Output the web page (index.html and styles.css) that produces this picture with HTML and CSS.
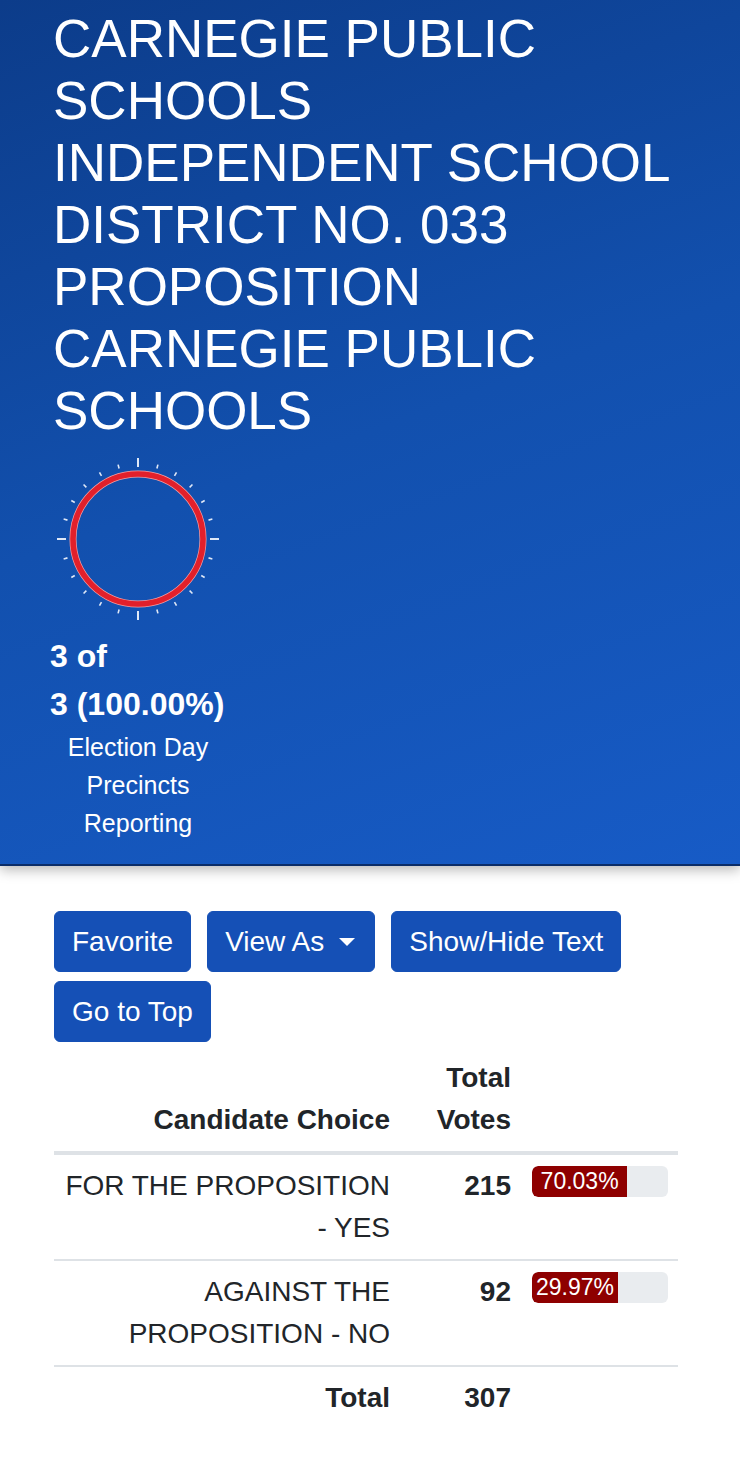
FILE: index.html
```html
<!DOCTYPE html>
<html lang="en">
<head>
<meta charset="utf-8">
<title>Carnegie Public Schools Proposition</title>
<link rel="stylesheet" href="styles.css">
</head>
<body>
<header class="hero">
  <h1 class="hero-title">CARNEGIE PUBLIC SCHOOLS INDEPENDENT SCHOOL DISTRICT NO. 033 PROPOSITION CARNEGIE PUBLIC SCHOOLS</h1>
  <div class="reporting">
    <svg class="gauge" width="170" height="170" viewBox="-85 -85 170 170" aria-hidden="true">
      <g class="ticks">
        <line class="major" x1="0" y1="-72" x2="0" y2="-81"/>
        <line x1="0" y1="-73" x2="0" y2="-77" transform="rotate(15)"/>
        <line x1="0" y1="-73" x2="0" y2="-77" transform="rotate(30)"/>
        <line x1="0" y1="-73" x2="0" y2="-77" transform="rotate(45)"/>
        <line x1="0" y1="-73" x2="0" y2="-77" transform="rotate(60)"/>
        <line x1="0" y1="-73" x2="0" y2="-77" transform="rotate(75)"/>
        <line class="major" x1="0" y1="-72" x2="0" y2="-81" transform="rotate(90)"/>
        <line x1="0" y1="-73" x2="0" y2="-77" transform="rotate(105)"/>
        <line x1="0" y1="-73" x2="0" y2="-77" transform="rotate(120)"/>
        <line x1="0" y1="-73" x2="0" y2="-77" transform="rotate(135)"/>
        <line x1="0" y1="-73" x2="0" y2="-77" transform="rotate(150)"/>
        <line x1="0" y1="-73" x2="0" y2="-77" transform="rotate(165)"/>
        <line class="major" x1="0" y1="-72" x2="0" y2="-81" transform="rotate(180)"/>
        <line x1="0" y1="-73" x2="0" y2="-77" transform="rotate(195)"/>
        <line x1="0" y1="-73" x2="0" y2="-77" transform="rotate(210)"/>
        <line x1="0" y1="-73" x2="0" y2="-77" transform="rotate(225)"/>
        <line x1="0" y1="-73" x2="0" y2="-77" transform="rotate(240)"/>
        <line x1="0" y1="-73" x2="0" y2="-77" transform="rotate(255)"/>
        <line class="major" x1="0" y1="-72" x2="0" y2="-81" transform="rotate(270)"/>
        <line x1="0" y1="-73" x2="0" y2="-77" transform="rotate(285)"/>
        <line x1="0" y1="-73" x2="0" y2="-77" transform="rotate(300)"/>
        <line x1="0" y1="-73" x2="0" y2="-77" transform="rotate(315)"/>
        <line x1="0" y1="-73" x2="0" y2="-77" transform="rotate(330)"/>
        <line x1="0" y1="-73" x2="0" y2="-77" transform="rotate(345)"/>
      </g>
      <circle class="ring-edge" cx="0" cy="0" r="65"/>
      <circle class="ring" cx="0" cy="0" r="65"/>
    </svg>
    <div class="count">
      <span class="count-line">3 of</span>
      <span class="count-line">3 (100.00%)</span>
    </div>
    <div class="count-label">Election Day Precincts Reporting</div>
  </div>
</header>

<main class="content">
  <div class="actions">
    <button class="btn" type="button">Favorite</button>
    <button class="btn" type="button">View As <span class="caret"></span></button>
    <button class="btn" type="button">Show/Hide Text</button>
    <button class="btn" type="button">Go to Top</button>
  </div>

  <table class="results">
    <colgroup>
      <col class="col-choice">
      <col class="col-votes">
      <col class="col-bar">
    </colgroup>
    <thead>
      <tr>
        <th class="num">Candidate Choice</th>
        <th class="num">Total Votes</th>
        <th></th>
      </tr>
    </thead>
    <tbody>
      <tr>
        <td class="num">FOR THE PROPOSITION - YES</td>
        <td class="num strong">215</td>
        <td class="bar-cell">
          <div class="progress"><div class="progress-fill" style="width:70.03%">70.03%</div></div>
        </td>
      </tr>
      <tr>
        <td class="num">AGAINST THE PROPOSITION - NO</td>
        <td class="num strong">92</td>
        <td class="bar-cell">
          <div class="progress"><div class="progress-fill" style="width:29.97%">29.97%</div></div>
        </td>
      </tr>
      <tr class="total-row">
        <td class="num strong">Total</td>
        <td class="num strong">307</td>
        <td></td>
      </tr>
    </tbody>
  </table>
</main>
</body>
</html>
```

FILE: styles.css
```css
* {
  box-sizing: border-box;
}

body {
  margin: 0;
  background: #ffffff;
  color: #212529;
  font-family: "Liberation Sans", Arial, Helvetica, sans-serif;
}

.hero {
  background: linear-gradient(160deg, #0c3c8a 0%, #1250ae 50%, #175bc6 100%);
  border-bottom: 2px solid #0b2d68;
  box-shadow: 0 4px 12px rgba(0, 0, 0, 0.28);
  padding: 8px 0 22px 50px;
  color: #ffffff;
}

.hero-title {
  margin: 0;
  padding-left: 3px;
  max-width: 633px;
  font-size: 53px;
  line-height: 62px;
  font-weight: normal;
  letter-spacing: 0;
}

.reporting {
  width: 176px;
  margin-top: 12px;
  text-align: center;
}

.gauge {
  display: block;
  margin: 0 auto;
}

.ticks line {
  stroke: #dfe8f7;
  stroke-width: 1.6;
  stroke-linecap: butt;
}

.ticks line.major {
  stroke-width: 2;
}

.ring-edge {
  fill: none;
  stroke: #f2a0a6;
  stroke-width: 7;
}

.ring {
  fill: none;
  stroke: #e2202b;
  stroke-width: 5.6;
}

.count {
  margin-top: 8px;
  text-align: left;
  font-weight: bold;
  font-size: 32px;
  line-height: 48px;
}

.count-line {
  display: block;
  white-space: nowrap;
}

.count-label {
  font-size: 25px;
  line-height: 38px;
  padding: 0 16px;
}

.content {
  padding: 45px 62px 0 54px;
}

.actions {
  display: flex;
  flex-wrap: wrap;
  column-gap: 16px;
  row-gap: 9px;
}

.btn {
  font-family: inherit;
  font-size: 28px;
  line-height: 42px;
  color: #ffffff;
  background: #1550b6;
  border: 1px solid #1550b6;
  border-radius: 6px;
  padding: 8.5px 17px;
  display: inline-flex;
  align-items: center;
}

.caret {
  display: inline-block;
  margin-left: 15px;
  margin-right: 2px;
  width: 0;
  height: 0;
  border-top: 8px solid #ffffff;
  border-left: 8px solid transparent;
  border-right: 8px solid transparent;
}

.results {
  width: 624px;
  margin-top: 5px;
  border-collapse: collapse;
  table-layout: fixed;
  font-size: 28px;
  line-height: 42px;
}

.col-choice {
  width: 348px;
}

.col-votes {
  width: 121px;
}

.col-bar {
  width: 155px;
}

.results th {
  font-weight: bold;
  vertical-align: bottom;
  padding: 10px 12px;
  border-bottom: 4px solid #dee2e6;
}

.results td {
  vertical-align: top;
  padding: 10px 12px;
  border-top: 2px solid #dee2e6;
}

.results td:first-child {
  padding-left: 0;
}

.results tbody tr:first-child td {
  border-top: none;
}

.num {
  text-align: right;
}

.strong {
  font-weight: bold;
}

.results td.bar-cell {
  padding: 11px 10px 10px 9px;
}

.progress {
  display: flex;
  height: 31px;
  background: #e9ecef;
  border-radius: 6px;
  overflow: hidden;
}

.progress-fill {
  background: #8e0000;
  color: #ffffff;
  font-size: 23px;
  line-height: 30px;
  text-align: center;
  padding: 0 4px;
  min-width: fit-content;
  white-space: nowrap;
  border-radius: 6px 0 0 6px;
}
```
